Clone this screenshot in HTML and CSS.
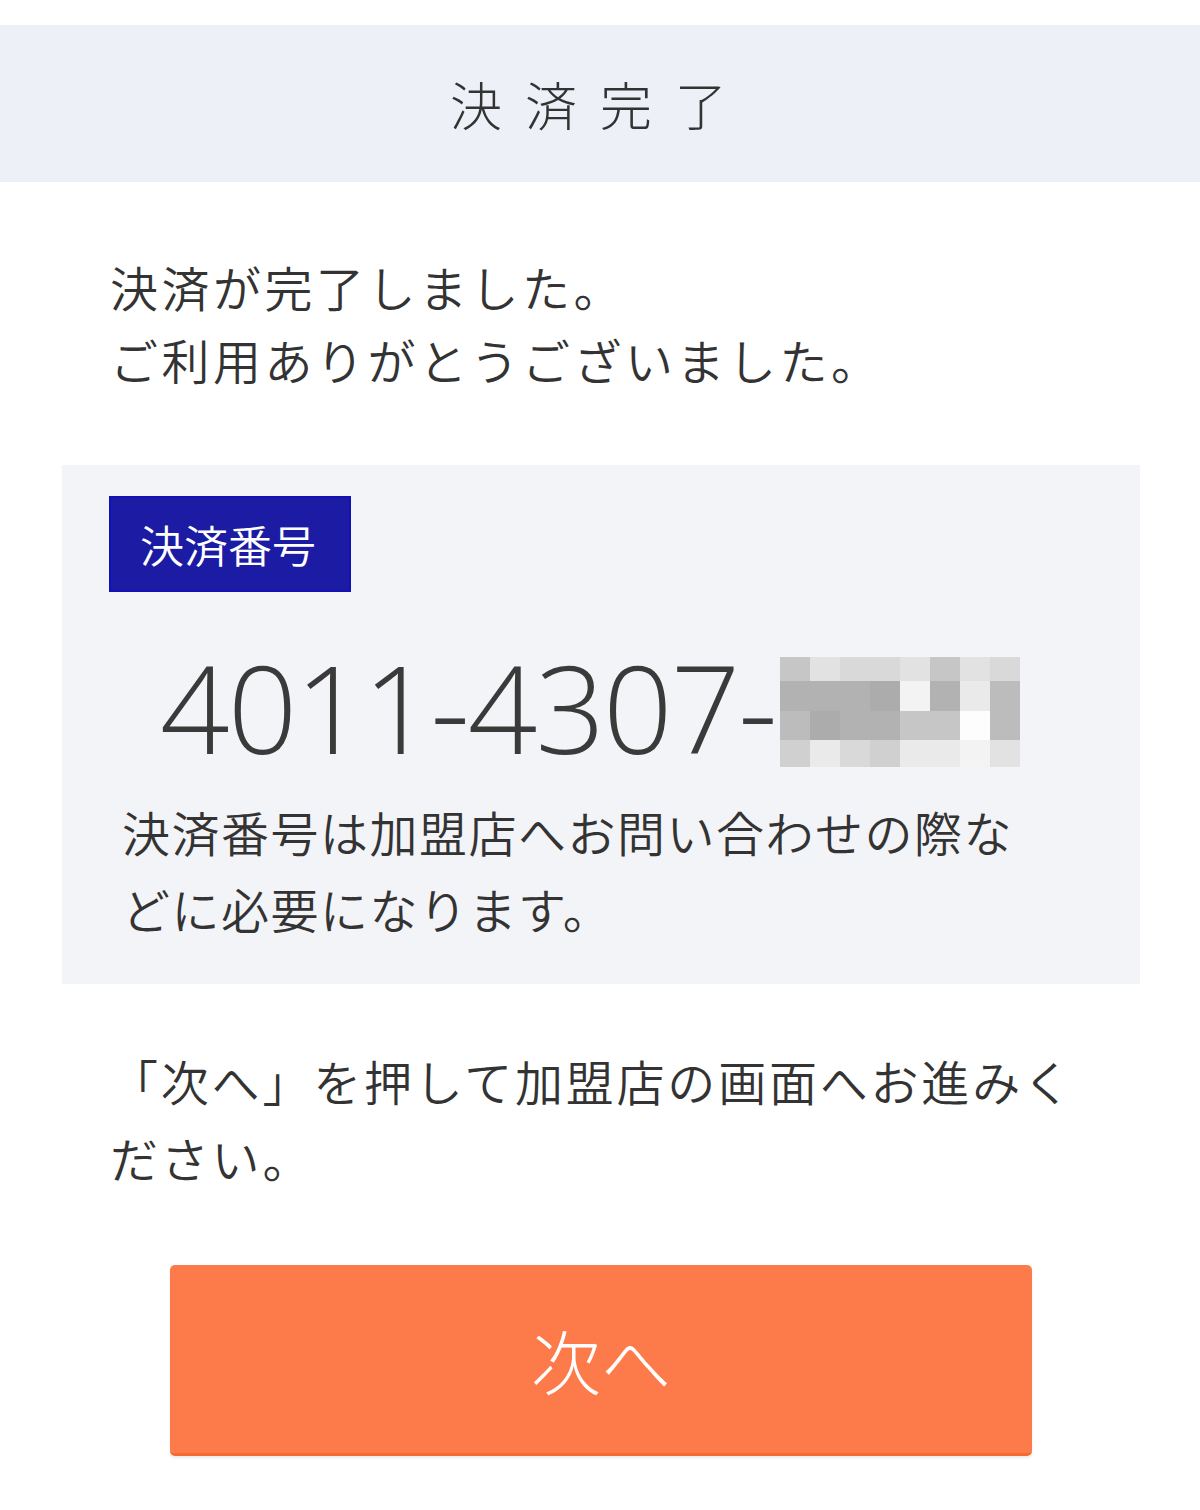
FILE: index.html
```html
<!DOCTYPE html>
<html lang="ja">
<head>
<meta charset="utf-8">
	<title>決済完了</title>
	<link rel="stylesheet" href="styles.css">
</head>
<body>
	<div class="header">
		<h1 class="title">決済完了</h1>
	</div>
	<div class="content">
		<p class="message">決済が完了しました。<br>ご利用ありがとうございました。</p>

		<div class="payBox">
			<div class="badge">決済番号</div>
			<div class="payNumber">
				<span class="digits">4011-4307-</span>
				<!-- 末尾はモザイク表示 -->
				<div class="mosaic">
					<span class="t4"></span><span class="t7"></span><span class="t6"></span><span class="t6"></span><span class="t7"></span><span class="t4"></span><span class="t7"></span><span class="t6"></span>
					<span class="t2"></span><span class="t2"></span><span class="t2"></span><span class="t1"></span><span class="t9"></span><span class="t2"></span><span class="t8"></span><span class="t3"></span>
					<span class="t3"></span><span class="t1"></span><span class="t2"></span><span class="t2"></span><span class="t4"></span><span class="t4"></span><span class="t10"></span><span class="t3"></span>
					<span class="t5"></span><span class="t8"></span><span class="t6"></span><span class="t5"></span><span class="t8"></span><span class="t8"></span><span class="t9"></span><span class="t7"></span>
				</div>
			</div>
			<p class="note">決済番号は加盟店へお問い合わせの際などに必要になります。</p>
		</div>

		<p class="guide">「次へ」を押して加盟店の画面へお進みください。</p>

		<div class="btnArea">
			<button class="nextBtn">次へ</button>
		</div>
	</div>
</body>
</html>
```

FILE: styles.css
```css
body{
	margin: 0px;
	padding: 0px;
	background-color: #FFFFFF;
	color: #333333;
	font-family: "Noto Sans CJK JP", "Noto Sans", sans-serif;
	font-weight: 350;
}
p{
	margin: 0px;
}
.header{
	margin-top: 25px;
	height: 157px;
	background-color: #EDF1F7;
	display: flex;
	align-items: center;
	justify-content: center;
}
.title{
	margin: 0px;
	font-size: 52px;
	font-weight: 300;
	letter-spacing: 23px;
	color: #333333;
}
.content{
	padding: 68px 60px 40px 62px;
}
.message{
	padding-left: 48px;
	font-size: 48px;
	letter-spacing: 3.5px;
	line-height: 73px;
}
.payBox{
	margin-top: 69px;
	background-color: #F3F4F7;
	padding: 31px 100px 37px 47px;
}
.badge{
	display: inline-block;
	background-color: #1B1BA3;
	border: 2px solid #1212B4;
	color: #FFFFFF;
	font-size: 44px;
	line-height: 92px;
	padding: 0px 33px 0px 29px;
}
.payNumber{
	display: flex;
	align-items: center;
	margin: 45px 0px 0px 51px;
	height: 140px;
}
.digits{
	font-family: "Open Sans", "Liberation Sans", sans-serif;
	font-weight: 300;
	font-size: 122px;
	color: #3A3A3A;
	letter-spacing: -2px;
}
.mosaic{
	display: grid;
	grid-template-columns: repeat(8, 30px);
	grid-template-rows: 24px 30px 29px 27px;
	margin: 10px 0px 0px 4px;
}
.t1{ background-color: #ACACAC; }
.t2{ background-color: #B2B2B2; }
.t3{ background-color: #BCBCBC; }
.t4{ background-color: #C6C6C6; }
.t5{ background-color: #D0D0D0; }
.t6{ background-color: #D9D9D9; }
.t7{ background-color: #E2E2E2; }
.t8{ background-color: #EAEAEA; }
.t9{ background-color: #F3F3F3; }
.t10{ background-color: #FDFDFD; }
.note{
	margin-top: 16px;
	padding-left: 13px;
	font-size: 48px;
	letter-spacing: 1.5px;
	line-height: 77px;
}
.guide{
	margin-top: 58px;
	padding: 0px 50px 0px 48px;
	font-size: 48px;
	letter-spacing: 2.8px;
	line-height: 77px;
}
.btnArea{
	margin-top: 69px;
	text-align: center;
}
.nextBtn{
	width: 862px;
	height: 191px;
	border: none;
	border-bottom: 3px solid #F76A2E;
	border-radius: 5px;
	background-color: #FD7B4A;
	color: #FFFFFF;
	font-family: "Noto Sans CJK JP", sans-serif;
	font-weight: 300;
	font-size: 70px;
	box-shadow: 0px 2px 3px rgba(0,0,0,0.08);
}
```
